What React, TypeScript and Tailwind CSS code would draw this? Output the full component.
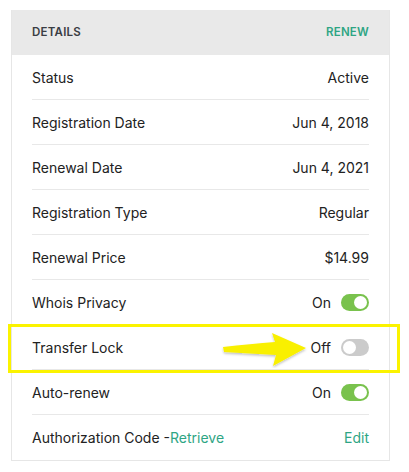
import React from 'react';

const Toggle = ({ on }: { on: boolean }) => (
  <span
    className={`relative inline-flex h-[17px] w-[28px] items-center rounded-full ${
      on ? 'justify-end bg-[#79c24d]' : 'justify-start bg-[#cbcbcb]'
    } px-[2px]`}
  >
    <span className="h-[13px] w-[13px] rounded-full bg-white" />
  </span>
);

type Row = {
  label: React.ReactNode;
  value: React.ReactNode;
  toggle?: boolean;
  highlight?: boolean;
  last?: boolean;
};

const rows: Row[] = [
  { label: 'Status', value: 'Active' },
  { label: 'Registration Date', value: 'Jun 4, 2018' },
  { label: 'Renewal Date', value: 'Jun 4, 2021' },
  { label: 'Registration Type', value: 'Regular' },
  { label: 'Renewal Price', value: '$14.99' },
  { label: 'Whois Privacy', value: 'On', toggle: true },
  { label: 'Transfer Lock', value: 'Off', toggle: false, highlight: true },
  { label: 'Auto-renew', value: 'On', toggle: true },
  {
    label: (
      <>
        Authorization Code -<span className="text-[#2ea584]">Retrieve</span>
      </>
    ),
    value: <span className="text-[#2ea584]">Edit</span>,
    last: true,
  },
];

export default function App() {
  return (
    <div className="min-h-[472px] bg-white pt-[10px] pl-[11px] font-['Inter',sans-serif] text-[#222]">
      <div className="w-[379px] border border-t-0 border-[#e6e6e6]">
        <div className="flex h-[45px] items-center justify-between bg-[#e9e9e9] px-5 text-[11.5px] font-semibold tracking-[0.02em]">
          <span className="text-[#3a3d44]">DETAILS</span>
          <span className="text-[#2ea584]">RENEW</span>
        </div>
        {rows.map((r, i) => (
          <div key={i} className="relative px-5">
            <div
              className={`flex h-[45px] items-center justify-between text-[14px] ${
                r.last ? '' : 'border-b border-[#e8e8e8]'
              }`}
            >
              <span>{r.label}</span>
              <span className="flex items-center gap-[10px]">
                {r.value}
                {r.toggle !== undefined && <Toggle on={r.toggle} />}
              </span>
            </div>
            {r.highlight && (
              <>
                <div className="pointer-events-none absolute -top-[1px] -bottom-[3px] -left-[4px] -right-[11px] border-[3px] border-[#fbf300]" />
                <svg
                  className="pointer-events-none absolute left-[209px] top-[7px]"
                  width="90"
                  height="36"
                  viewBox="0 0 90 36"
                >
                  <defs>
                    <filter id="sh" x="-10%" y="-20%" width="130%" height="150%">
                      <feDropShadow dx="0" dy="1.5" stdDeviation="1.2" floodColor="#000" floodOpacity="0.25" />
                    </filter>
                  </defs>
                  <path
                    d="M2 15 C20 13 38 11 54 10 L51 1 L85 16 L52 34 L55 23 C38 22 20 21 3 20 Z"
                    fill="#f9f000"
                    filter="url(#sh)"
                  />
                </svg>
              </>
            )}
          </div>
        ))}
      </div>
    </div>
  );
}
